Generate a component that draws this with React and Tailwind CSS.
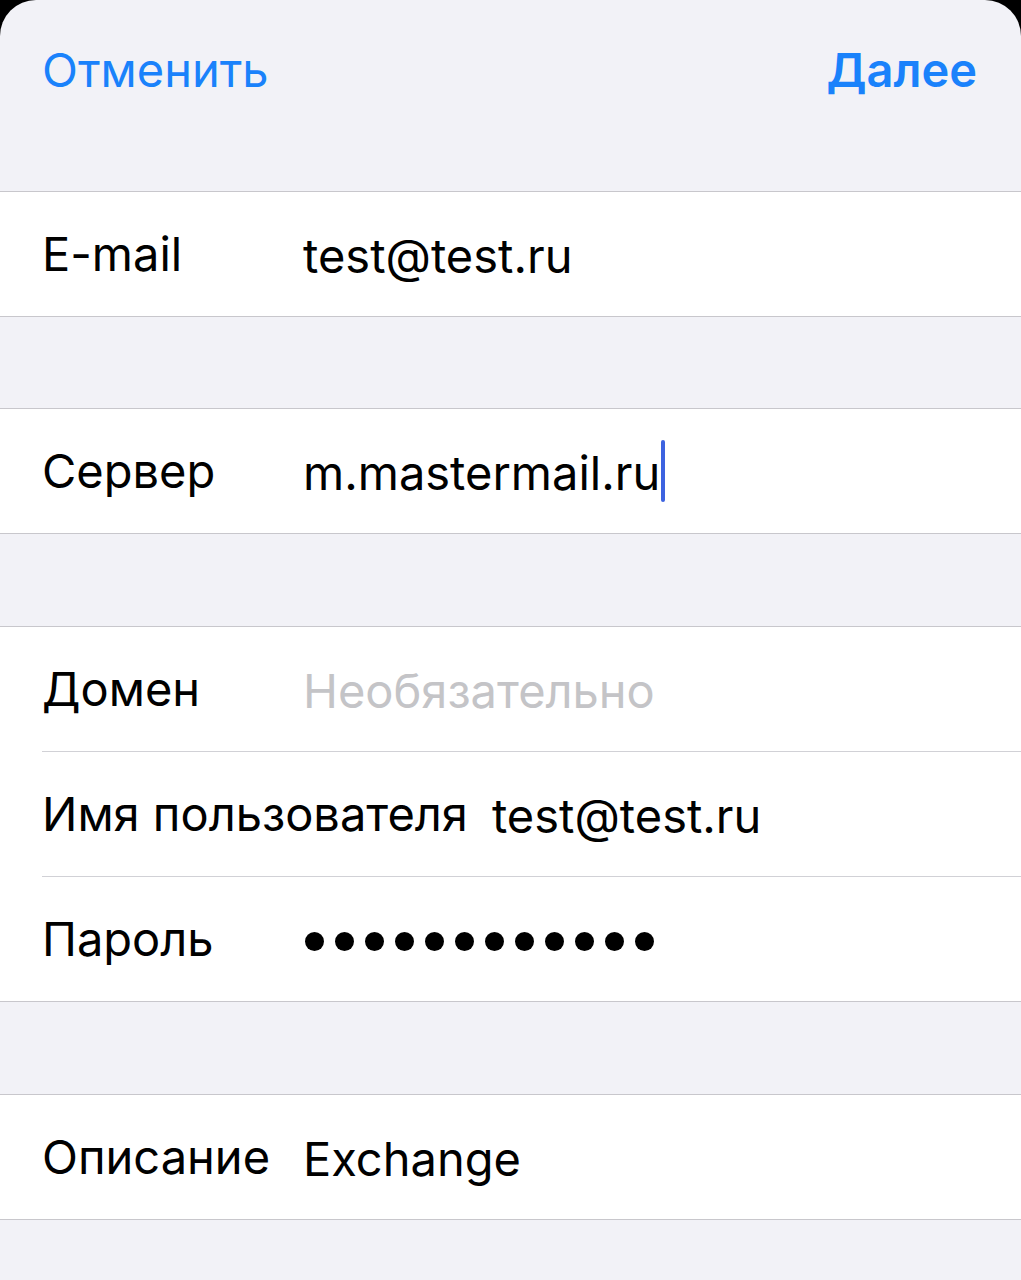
export default function App() {
  const dots = Array.from({ length: 12 });

  return (
    <div className="min-h-screen bg-black font-['Inter',sans-serif]">
      <div className="min-h-[1280px] bg-[#f2f2f7] rounded-t-[36px] overflow-hidden">
        {/* header */}
        <div className="h-[191px] flex items-start justify-between pl-[42px] pr-[44px] pt-[41px]">
          <button className="text-[47px] leading-[58px] text-[#1a82fb]">Отменить</button>
          <button className="text-[47px] leading-[58px] font-semibold text-[#1a82fb]">Далее</button>
        </div>

        {/* email */}
        <div className="bg-white border-y border-[#c8c7cc]">
          <Row label="E-mail">
            <span>test@test.ru</span>
          </Row>
        </div>

        <div className="h-[91px]" />

        {/* server */}
        <div className="bg-white border-y border-[#c8c7cc]">
          <Row label="Сервер">
            <span>m.mastermail.ru</span>
            <span className="inline-block w-[4px] h-[62px] bg-[#3d63e0] rounded-full ml-[1px] -mt-[4px]" />
          </Row>
        </div>

        <div className="h-[92px]" />

        {/* account */}
        <div className="bg-white border-y border-[#c8c7cc]">
          <Row label="Домен" divider>
            <span className="text-[#c4c4c7]">Необязательно</span>
          </Row>
          <Row label="Имя пользователя" divider>
            <span>test@test.ru</span>
          </Row>
          <Row label="Пароль">
            <div className="flex items-center gap-[11px] pl-[2px]">
              {dots.map((_, i) => (
                <span key={i} className="w-[19px] h-[19px] rounded-full bg-black" />
              ))}
            </div>
          </Row>
        </div>

        <div className="h-[92px]" />

        {/* description */}
        <div className="bg-white border-y border-[#c8c7cc]">
          <Row label="Описание">
            <span>Exchange</span>
          </Row>
        </div>
      </div>
    </div>
  );
}

function Row({ label, divider, children }) {
  return (
    <div className="pl-[42px]">
      <div
        className={
          "h-[124px] flex items-center text-[47px] text-black " +
          (divider ? "border-b border-[#d1d1d6] h-[125px]" : "")
        }
      >
        <div className="min-w-[261px] pr-[24px] shrink-0">{label}</div>
        <div className="flex items-center pt-[4px]">{children}</div>
      </div>
    </div>
  );
}
